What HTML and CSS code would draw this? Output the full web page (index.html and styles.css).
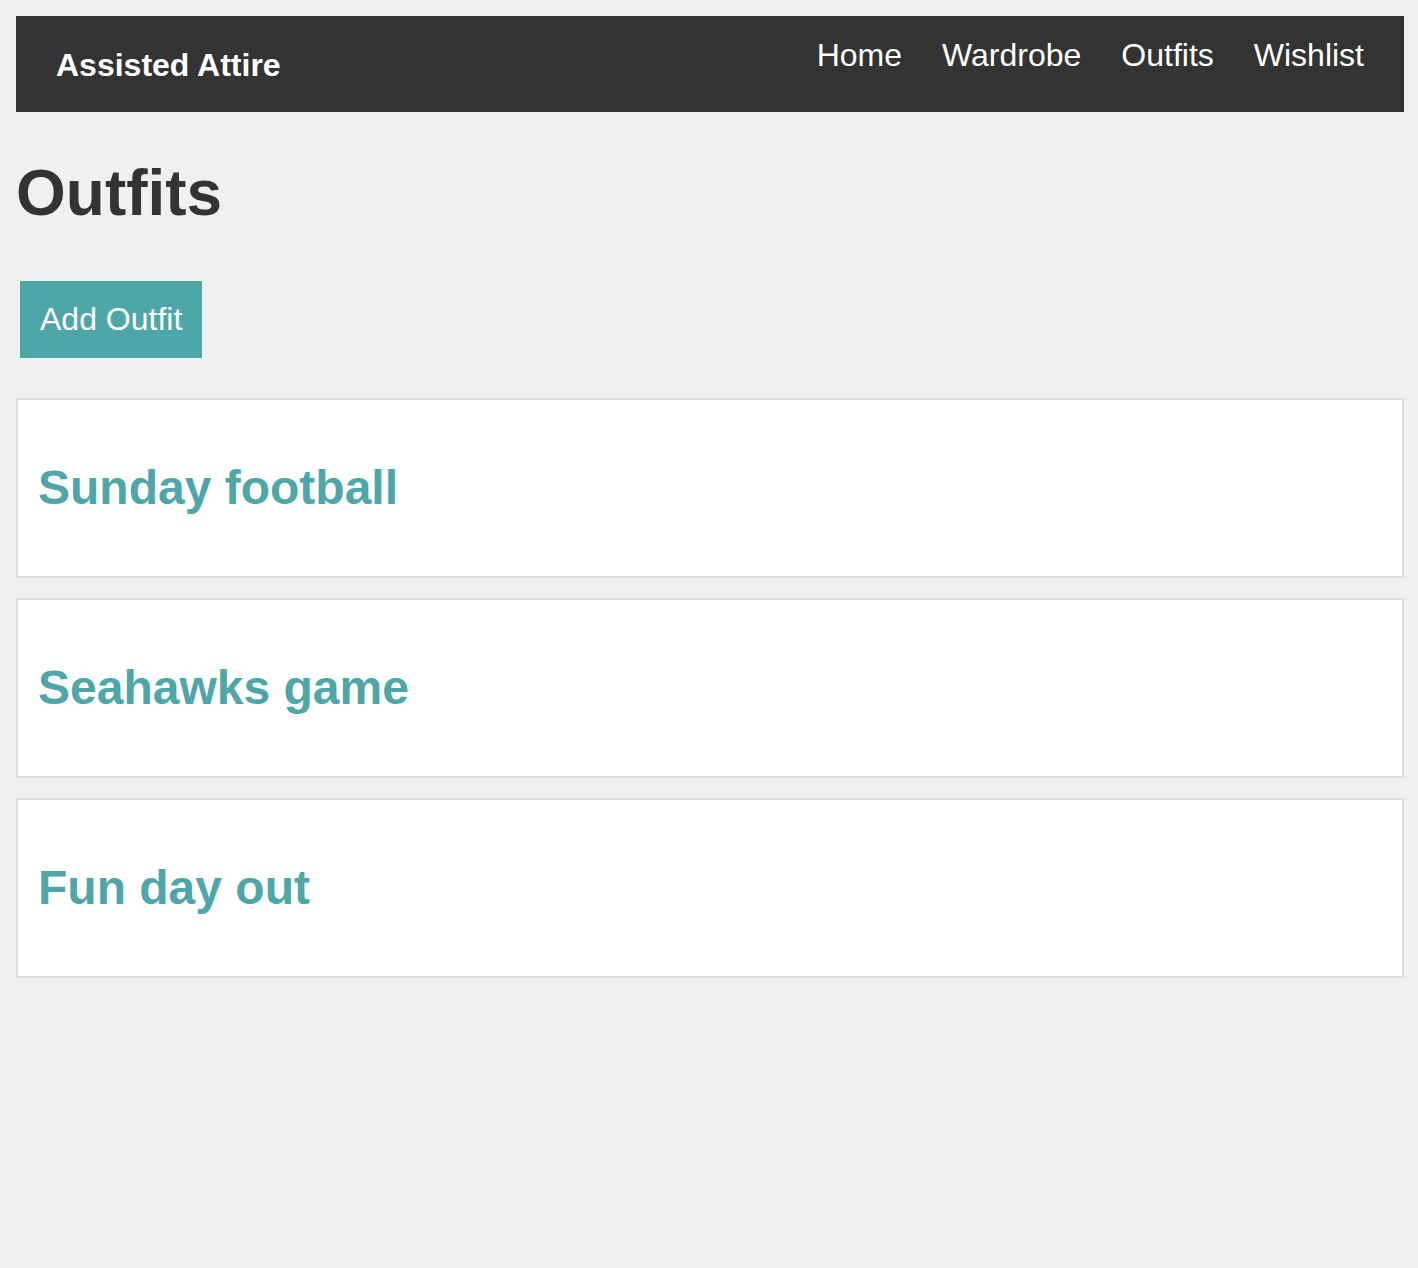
FILE: index.html
```html
<!DOCTYPE html>
<html lang="en">
<head>
<meta charset="utf-8">
<title>Outfits - Assisted Attire</title>
<link rel="stylesheet" href="styles.css">
</head>
<body>
<header class="site-header">
  <div class="logo">Assisted Attire</div>
  <nav class="nav">
    <a href="#" class="nav-link">Home</a>
    <a href="#" class="nav-link">Wardrobe</a>
    <a href="#" class="nav-link">Outfits</a>
    <a href="#" class="nav-link">Wishlist</a>
  </nav>
</header>
<main class="main">
  <h1 class="page-title">Outfits</h1>
  <button class="add-btn" type="button">Add Outfit</button>
  <div class="outfit-list">
    <div class="outfit-card"><h2 class="outfit-name">Sunday football</h2></div>
    <div class="outfit-card"><h2 class="outfit-name">Seahawks game</h2></div>
    <div class="outfit-card"><h2 class="outfit-name">Fun day out</h2></div>
  </div>
</main>
</body>
</html>
```

FILE: styles.css
```css
html, body {
  margin: 0;
  padding: 0;
}
body {
  background: #f0f0f0;
  padding: 16px 14px 16px 16px;
  font-family: "Liberation Sans", Arial, sans-serif;
  color: #333;
}
.site-header {
  background: #333;
  height: 96px;
  padding: 0 40px;
  display: flex;
  justify-content: space-between;
  align-items: center;
  box-sizing: border-box;
}
.logo {
  color: #fff;
  font-size: 32px;
  font-weight: bold;
  line-height: 36px;
  padding-top: 2px;
}
.nav {
  align-self: flex-start;
  margin-top: 21px;
  display: flex;
  gap: 40px;
}
.nav-link {
  color: #fff;
  text-decoration: none;
  font-size: 32px;
  line-height: 36px;
}
.page-title {
  font-size: 64px;
  line-height: 74px;
  font-weight: bold;
  margin: 44px 0 51px;
  color: #333;
}
.add-btn {
  display: block;
  margin: 0 0 40px 4px;
  background: #4da6a8;
  color: #fff;
  border: none;
  font-family: "Liberation Sans", Arial, sans-serif;
  font-size: 32px;
  line-height: 37px;
  padding: 20px;
  cursor: pointer;
}
.outfit-list {
  display: flex;
  flex-direction: column;
  gap: 20px;
}
.outfit-card {
  background: #fff;
  border: 2px solid #ddd;
  padding: 20px;
}
.outfit-name {
  margin: 40px 0;
  font-size: 48px;
  line-height: 56px;
  font-weight: bold;
  color: #4da6a8;
}
```
